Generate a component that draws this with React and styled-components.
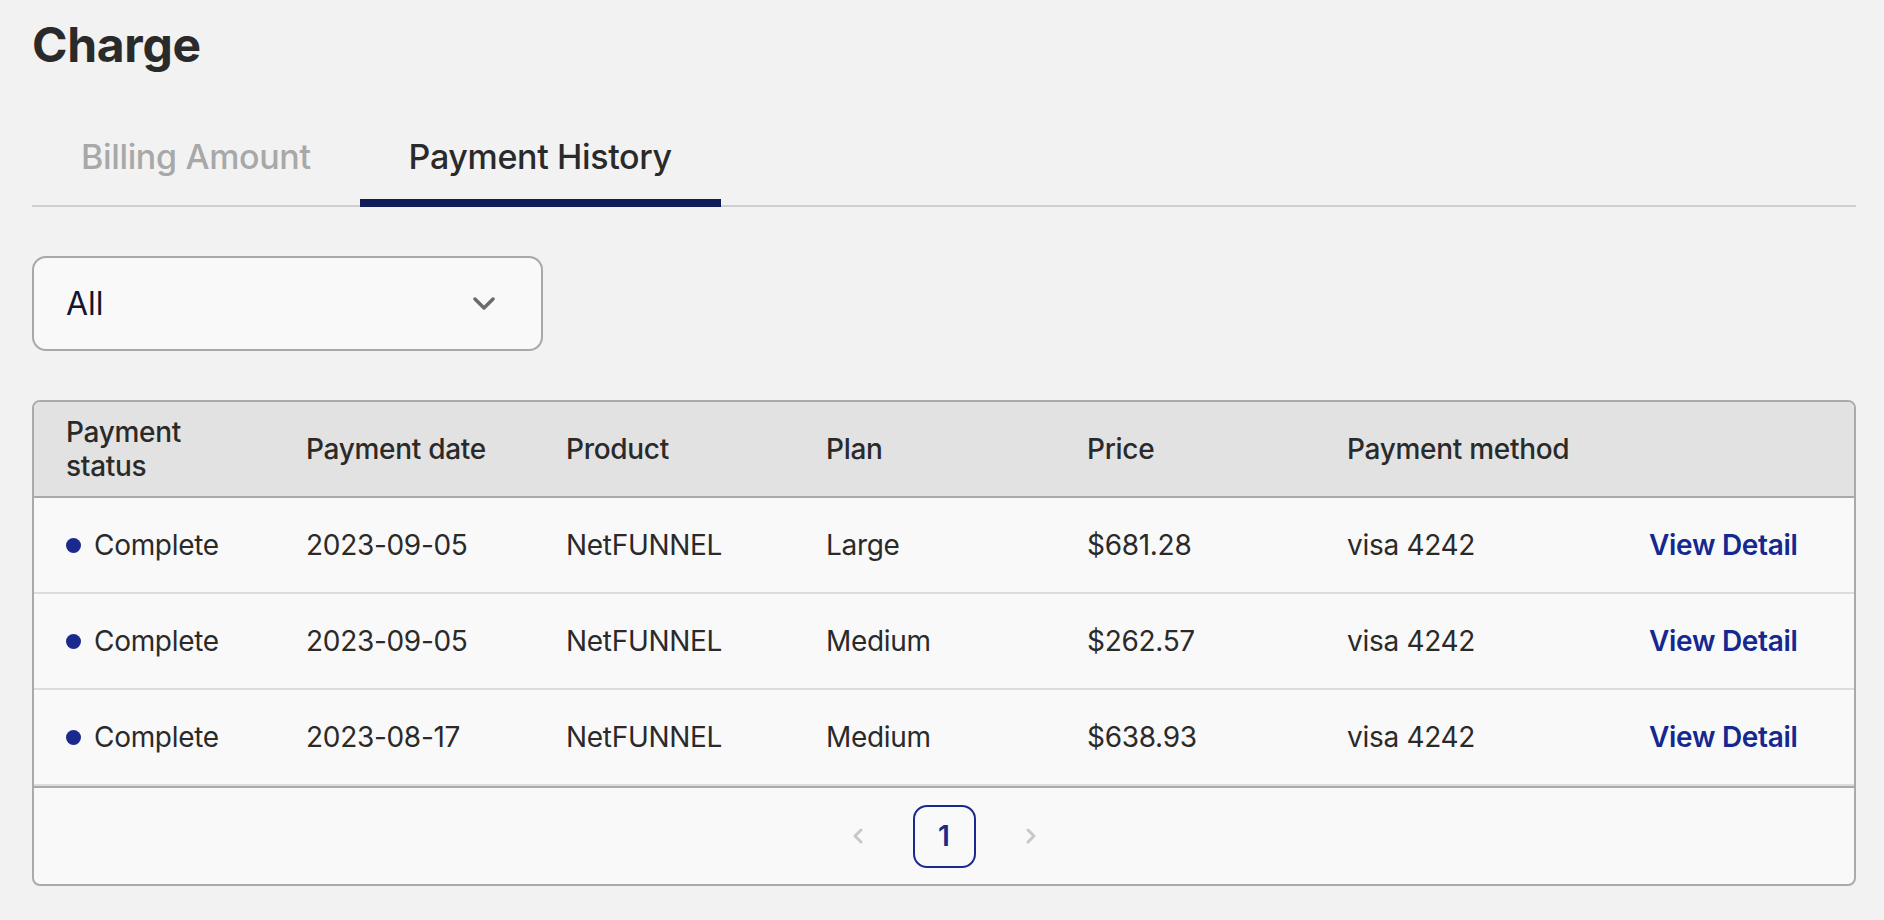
import React, { useState } from 'react';
import styled, { createGlobalStyle } from 'styled-components';

const GlobalStyle = createGlobalStyle`
    body {
        margin: 0;
        background: #f2f2f2;
        font-family: Inter, "Noto Sans", sans-serif;
        color: #2a2a2a;
    }
`

const Page = styled.div`
    padding: 16px 28px 32px 32px;
`
const Title = styled.h1`
    margin: 0;
    font-size: 48px;
    line-height: 58px;
    font-weight: 700;
    letter-spacing: -0.3px;
    color: #2a2a2a;
`
const TabBar = styled.div`
    display: flex;
    margin-top: 62px;
    border-bottom: 2px solid #cfcfcf;
`
const Tab = styled.div`
    padding: 0 49px 22px;
    margin-bottom: -2px;
    font-size: 34px;
    line-height: 41px;
    font-weight: 500;
    letter-spacing: -0.35px;
    cursor: pointer;
    color: ${props => props.active ? '#2a2a2a' : '#a8a8a8'};
    border-bottom: 8px solid ${props => props.active ? '#111d58' : 'transparent'};
`
const Select = styled.div`
    box-sizing: border-box;
    width: 511px;
    height: 95px;
    margin-top: 49px;
    padding: 0 46px 0 32px;
    display: flex;
    align-items: center;
    justify-content: space-between;
    background: #f9f9f9;
    border: 2px solid #a8a8a8;
    border-radius: 14px;
    font-size: 32px;
    color: #111633;
`
const Table = styled.div`
    margin-top: 49px;
    background: #f9f9f9;
    border: 2px solid #aaaaaa;
    border-radius: 8px;
    overflow: hidden;
`
const Row = styled.div`
    display: grid;
    grid-template-columns: 240px 260px 260px 261px 260px 302px 1fr;
    align-items: center;
    min-height: 94px;
    font-size: 28px;
    line-height: 34px;
    letter-spacing: -0.3px;
    font-weight: ${props => props.head ? 500 : 400};
    background: ${props => props.head ? '#e2e2e2' : 'transparent'};
    border-bottom: 2px solid ${props => props.head ? '#aaaaaa' : '#dcdcdc'};
    &:last-of-type {
        border-bottom: none;
    }
`
const Cell = styled.div`
    padding: 0 32px;
    display: flex;
    align-items: center;
`
const Dot = styled.span`
    width: 15px;
    height: 15px;
    border-radius: 50%;
    background: #1a2a8c;
    margin-right: 13px;
    flex-shrink: 0;
`
const Link = styled.a`
    color: #15288f;
    font-weight: 600;
    cursor: pointer;
`
const Footer = styled.div`
    height: 96px;
    border-top: 2px solid #aaaaaa;
    display: flex;
    align-items: center;
    justify-content: center;
    gap: 50px;
`
const PageButton = styled.div`
    box-sizing: border-box;
    width: 63px;
    height: 63px;
    border: 2px solid #1a2a8c;
    border-radius: 14px;
    display: flex;
    align-items: center;
    justify-content: center;
    font-size: 28px;
    font-weight: 600;
    color: #1a2a8c;
`
const Arrow = styled.svg`
    display: block;
    width: 10px;
    height: 16px;
`

const payments = [
    { date: '2023-09-05', plan: 'Large', price: '$681.28' },
    { date: '2023-09-05', plan: 'Medium', price: '$262.57' },
    { date: '2023-08-17', plan: 'Medium', price: '$638.93' },
]

export default function App() {
    const [tab, setTab] = useState('history');

    return (
        <Page>
            <GlobalStyle />
            <Title>Charge</Title>

            <TabBar>
                <Tab active={tab === 'billing'} onClick={() => setTab('billing')}>Billing Amount</Tab>
                <Tab active={tab === 'history'} onClick={() => setTab('history')}>Payment History</Tab>
            </TabBar>

            <Select>
                <span>All</span>
                <svg width="22" height="14" viewBox="0 0 22 14">
                    <polyline points="2,2 11,11 20,2" fill="none" stroke="#6b6b6b" strokeWidth="3.5" strokeLinecap="round" strokeLinejoin="round" />
                </svg>
            </Select>

            <Table>
                <Row head>
                    <Cell>Payment status</Cell>
                    <Cell>Payment date</Cell>
                    <Cell>Product</Cell>
                    <Cell>Plan</Cell>
                    <Cell>Price</Cell>
                    <Cell>Payment method</Cell>
                    <Cell></Cell>
                </Row>
                {payments.map((p, i) => (
                    <Row key={i}>
                        <Cell><Dot />Complete</Cell>
                        <Cell>{p.date}</Cell>
                        <Cell>NetFUNNEL</Cell>
                        <Cell>{p.plan}</Cell>
                        <Cell>{p.price}</Cell>
                        <Cell>visa 4242</Cell>
                        <Cell><Link>View Detail</Link></Cell>
                    </Row>
                ))}
                <Footer>
                    <Arrow viewBox="0 0 10 16">
                        <polyline points="8,2 2,8 8,14" fill="none" stroke="#c8c8c8" strokeWidth="3" strokeLinecap="round" strokeLinejoin="round" />
                    </Arrow>
                    <PageButton>1</PageButton>
                    <Arrow viewBox="0 0 10 16">
                        <polyline points="2,2 8,8 2,14" fill="none" stroke="#c8c8c8" strokeWidth="3" strokeLinecap="round" strokeLinejoin="round" />
                    </Arrow>
                </Footer>
            </Table>
        </Page>
    )
}
